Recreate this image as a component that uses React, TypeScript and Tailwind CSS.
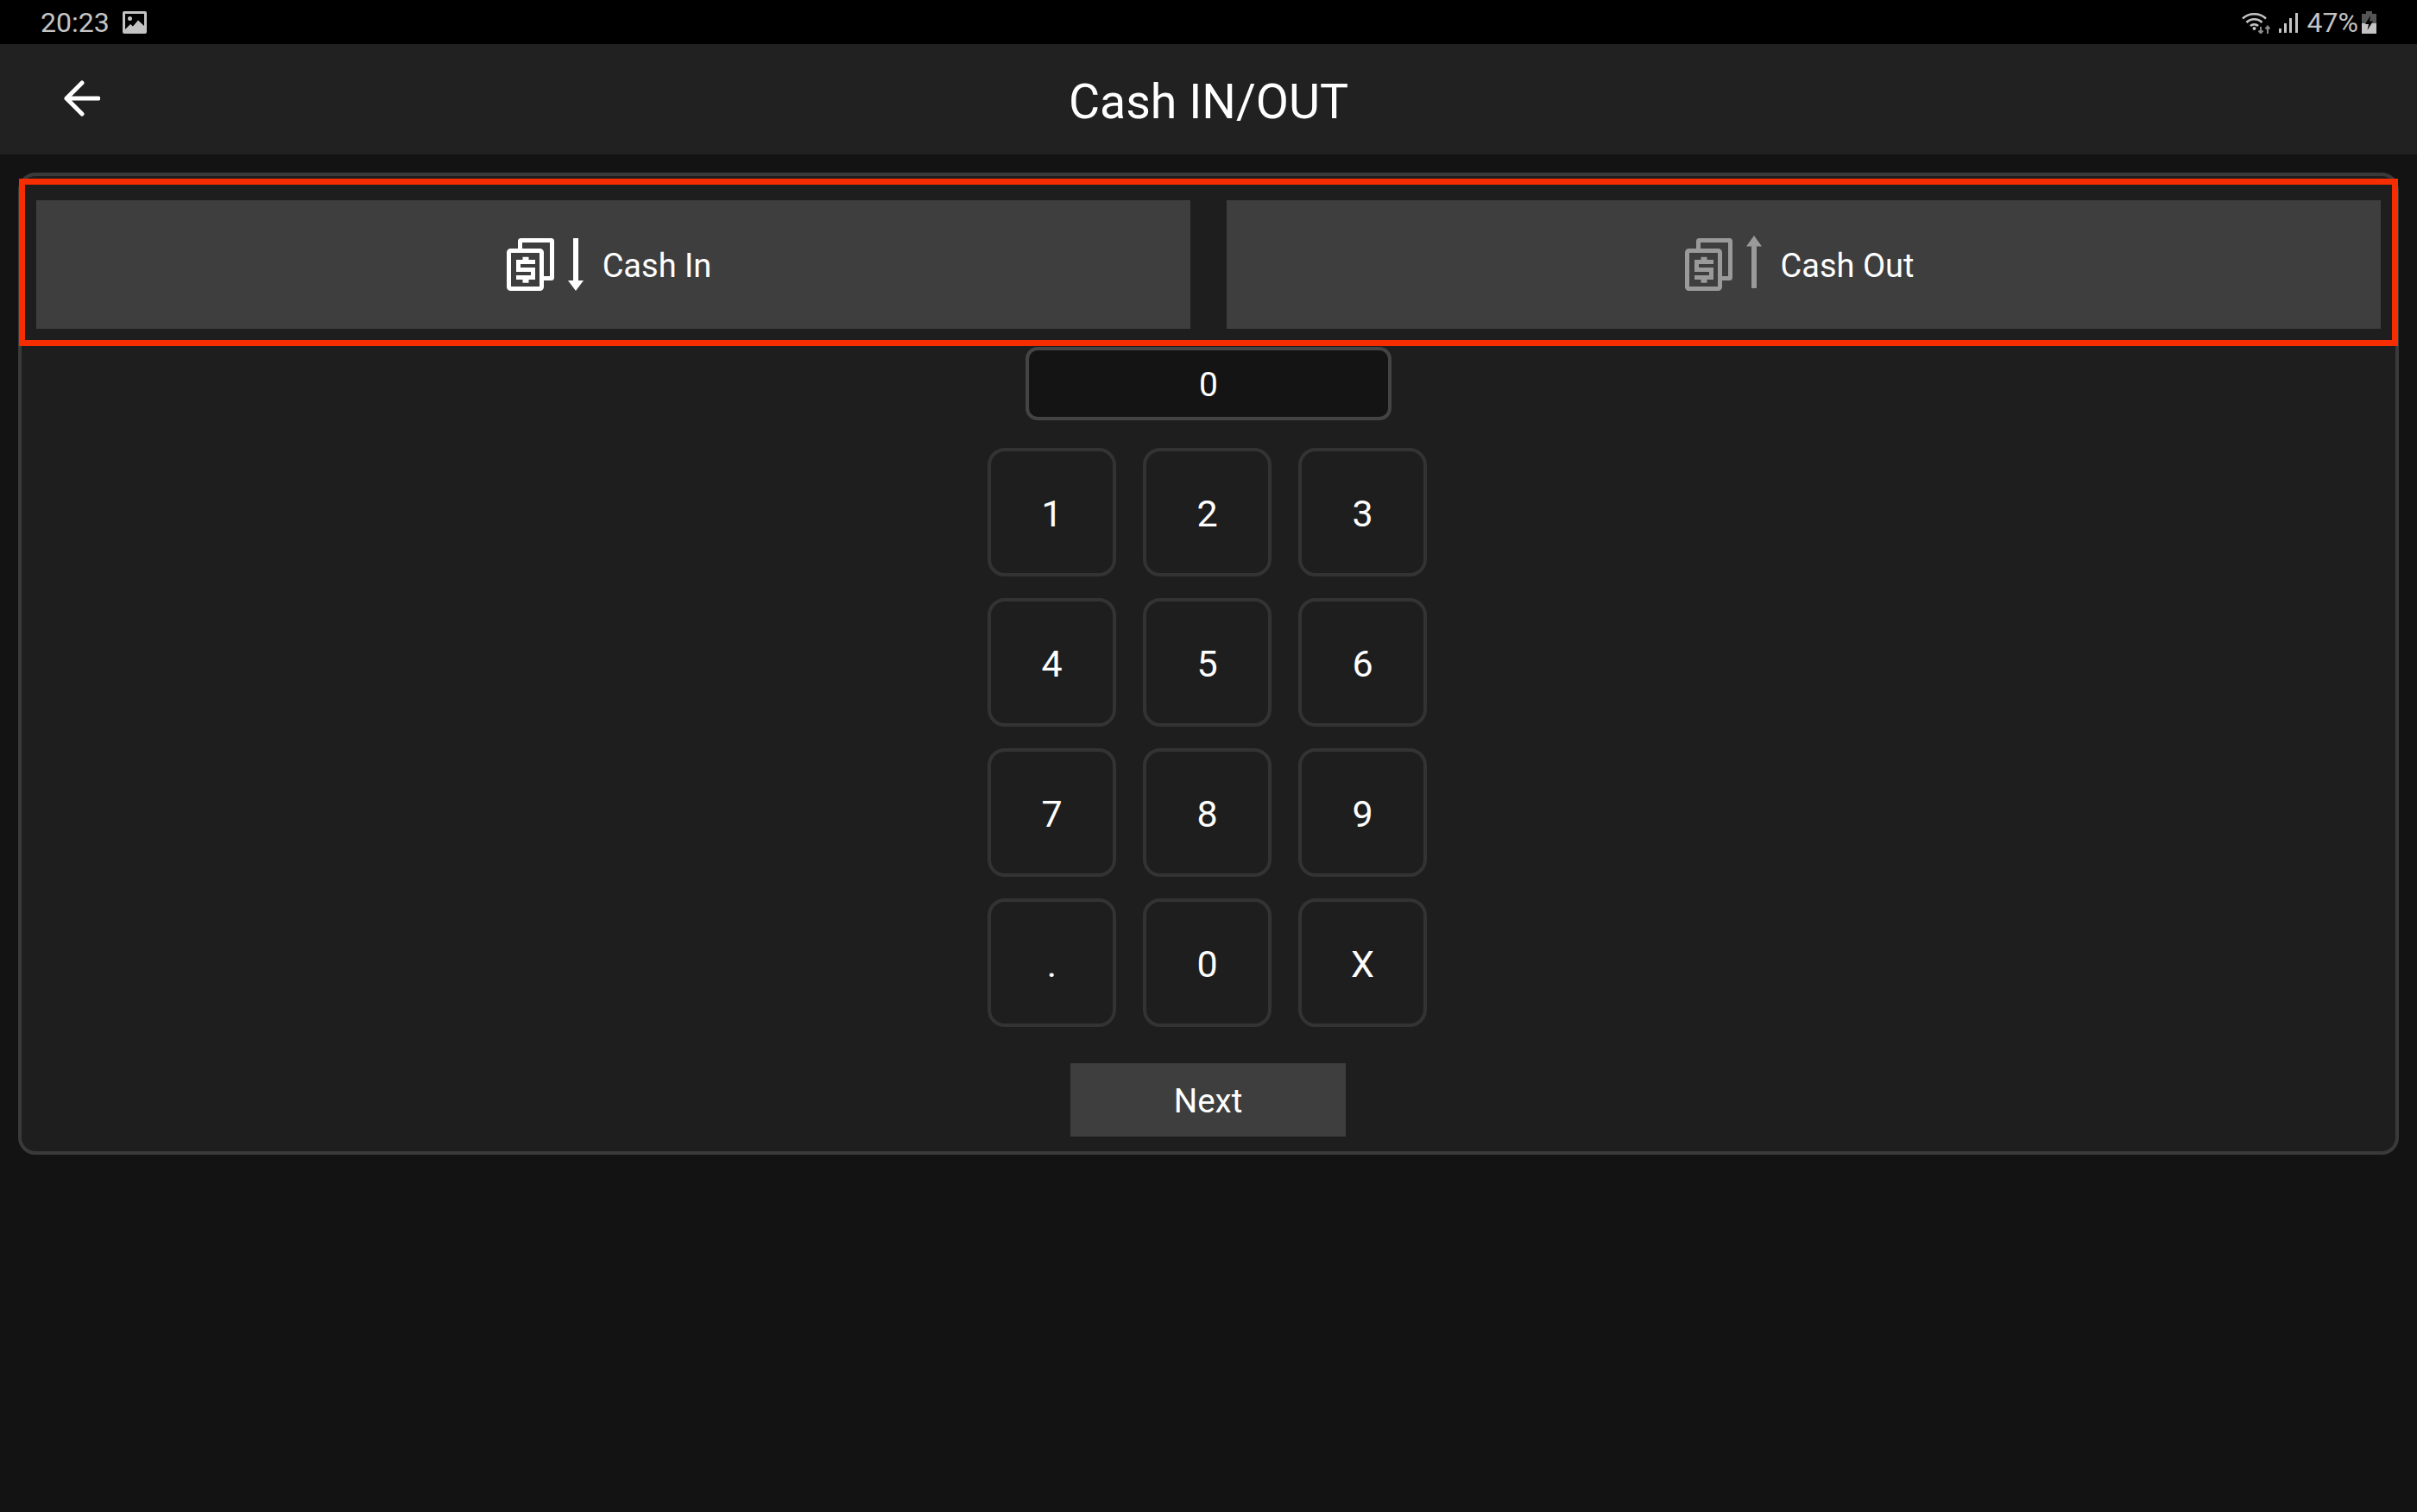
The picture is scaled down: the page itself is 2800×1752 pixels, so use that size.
import React from "react";

const keys = ["1", "2", "3", "4", "5", "6", "7", "8", "9", ".", "0", "X"];

const MoneyIcon: React.FC<{ direction: "in" | "out"; color: string }> = ({
  direction,
  color,
}) => {
  return (
    <svg width="89" height="67" viewBox="0 -3 89 67" fill="none">
      <rect
        x="2.500"
        y="14.500"
        width="38"
        height="44"
        rx="2"
        stroke={color}
        strokeWidth="5"
      />
      <path
        d="M15.500 12V3.500a1 1 0 0 1 1-1H51.500a1 1 0 0 1 1 1V45.500a1 1 0 0 1-1 1H43"
        stroke={color}
        strokeWidth="5"
      />
      <path
        d="M33 27.500H13.500V36.500H30.500V45.500H11"
        stroke={color}
        strokeWidth="5"
      />
      <path d="M22 21.700V26M22 47V51.700" stroke={color} strokeWidth="7" />
      {direction === "in" ? (
        <>
          <rect x="77" y="0" width="6" height="50" fill={color} />
          <path d="M71 49H89L80 61Z" fill={color} />
        </>
      ) : (
        <>
          <rect x="77" y="9" width="6" height="49" rx="1" fill={color} />
          <path d="M71 9.500H89L80 -3Z" fill={color} />
        </>
      )}
    </svg>
  );
};

const StatusBar = () => {
  return (
    <div className="h-[51px] bg-black flex items-center justify-between pl-[47px] pr-[47px] text-[#c4c4c4] text-[32px]">
      <div className="flex items-center gap-[15px]">
        <span className="mt-[1px]">20:23</span>
        <svg width="28" height="26" viewBox="0 0 28 26" className="mt-[1px]">
          <rect width="28" height="26" rx="2" fill="#c4c4c4" />
          <rect x="3" y="3" width="22" height="20" fill="#000" />
          <circle cx="8.500" cy="8.500" r="2.500" fill="#c4c4c4" />
          <path d="M3 21L9 15L12 17.500L18 10.500L25 17V23H3Z" fill="#c4c4c4" />
        </svg>
      </div>
      <div className="flex items-center">
        <svg width="33" height="26" viewBox="0 0 33 26" fill="none" className="mr-[10px]">
          <path
            d="M1 8.500C8 1.500 21 1.500 28 8.500M5.500 13C10.500 8 18.500 8 23.500 13M10 17C12.500 14.500 16.500 14.500 19 17"
            stroke="#c4c4c4"
            strokeWidth="2.500"
          />
          <circle cx="14.500" cy="20" r="2" fill="#c4c4c4" />
          <path d="M22 18V25M19.500 22.500L22 25.500L24.500 22.500" stroke="#8a8a8a" strokeWidth="2" />
          <path d="M30 26V18M27.500 20.500L30 17.500L32.500 20.500" stroke="#8a8a8a" strokeWidth="2" />
        </svg>
        <svg width="22" height="24" viewBox="0 0 22 24" className="mr-[11px]">
          <rect x="0" y="19" width="3" height="5" fill="#c4c4c4" />
          <rect x="6" y="13" width="3" height="11" fill="#c4c4c4" />
          <rect x="12" y="7" width="3" height="17" fill="#c4c4c4" />
          <rect x="19" y="1" width="3" height="23" fill="#c4c4c4" />
        </svg>
        <span className="mr-[4px] mt-[1px]">47%</span>
        <svg width="17" height="26" viewBox="0 0 17 26">
          <rect x="5" y="0" width="7" height="3" fill="#555" />
          <rect x="0" y="3" width="17" height="11" fill="#555" />
          <rect x="0" y="14" width="17" height="12" fill="#c4c4c4" />
          <path d="M10 5L4 15H8L6.500 22L13 11.500H9Z" fill="#000" />
        </svg>
      </div>
    </div>
  );
};

export default function App() {
  return (
    <div className="w-[2800px] h-[1752px] bg-[#131313] overflow-hidden text-white font-[Roboto,sans-serif]">
      <StatusBar />

      <div className="h-[128px] bg-[#212121] grid grid-cols-3 items-center pl-[74px]">
        <svg width="42" height="42" viewBox="0 0 42 42" fill="none" className="mb-[2px]">
          <path
            d="M40 21H3M21 3L3 21L21 39"
            stroke="#fff"
            strokeWidth="5"
            strokeLinecap="round"
            strokeLinejoin="round"
          />
        </svg>
        <div className="text-center text-[55.500px] pr-[74px] mt-[8px] whitespace-nowrap">Cash IN/OUT</div>
      </div>

      <div className="mx-[21px] mt-[21px] relative border-4 border-[#3a3a3a] rounded-[20px] bg-[#1e1e1e] px-[17px] pt-[28px] pb-[17px] flex flex-col items-center">
        <div className="w-full flex gap-[42px]">
          <button className="flex-1 h-[149px] bg-[#3e3e3e] flex items-center justify-center gap-[22px] pr-[10px] text-[38px]">
            <MoneyIcon direction="in" color="#ffffff" />
            <span className="mt-[3px]">Cash In</span>
          </button>
          <button className="flex-1 h-[149px] bg-[#3e3e3e] flex items-center justify-center gap-[22px] pr-[10px] text-[38px]">
            <MoneyIcon direction="out" color="#9a9a9a" />
            <span className="mt-[3px]">Cash Out</span>
          </button>
        </div>

        <div className="mt-[21px] w-[424px] h-[85px] bg-[#141414] border-4 border-[#444444] rounded-[14px] flex items-center justify-center text-[39px] pt-[3px]">
          0
        </div>

        <div className="mt-[32px] mr-[3px] grid grid-cols-3 gap-x-[31px] gap-y-[25px]">
          {keys.map((k) => (
            <button
              key={k}
              className="w-[149px] h-[149px] border-4 border-[#333333] rounded-[20px] flex items-center justify-center text-[43px] pt-[3px]"
            >
              {k}
            </button>
          ))}
        </div>

        <button className="mt-[42px] mr-[1px] w-[319px] h-[85px] bg-[#3e3e3e] flex items-center justify-center text-[38.500px] pt-[3px]">
          Next
        </button>

        {/* red highlight box drawn over the two top buttons */}
        <div className="absolute left-[-3px] top-[3px] w-[2756px] h-[194px] border-[7px] border-[#f62d00] pointer-events-none" />
      </div>
    </div>
  );
}
